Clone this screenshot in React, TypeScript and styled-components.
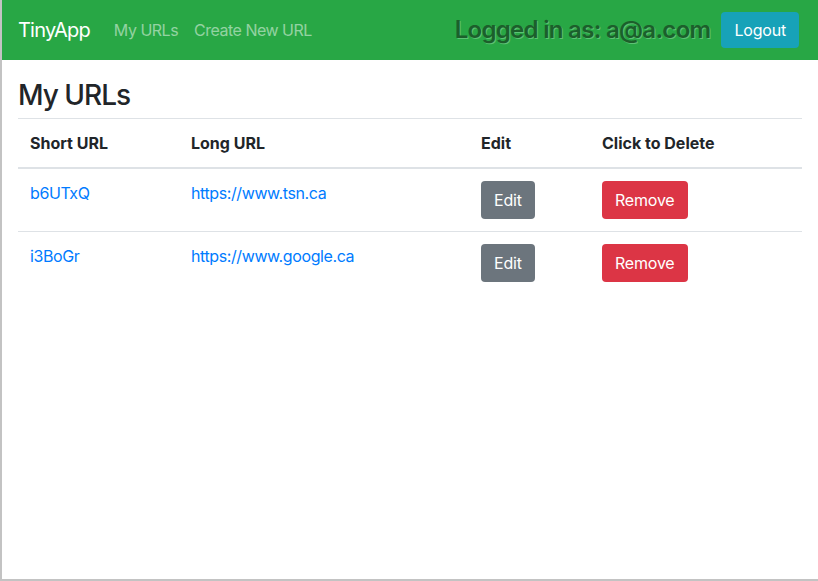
import React from "react";
import styled, { createGlobalStyle } from "styled-components";

const Global = createGlobalStyle`
  html, body { margin: 0; padding: 0; background: #fff; }
  body {
    font-family: Inter, "Noto Sans", "Liberation Sans", sans-serif;
    font-size: 16px;
    line-height: 1.5;
    color: #212529;
  }
  * { box-sizing: border-box; }
`;

const Frame = styled.div`
  min-height: 581px;
  border-left: 2px solid #c3c3c3;
  border-bottom: 2px solid #c3c3c3;
  display: flex;
  flex-direction: column;
`;

const Navbar = styled.nav`
  height: 60px;
  background: #28a745;
  display: flex;
  align-items: center;
  padding: 0 19px 0 16px;
`;

const Brand = styled.a`
  font-size: 20px;
  color: #fff;
  text-decoration: none;
  margin-right: 16px;
  letter-spacing: -0.8px;
`;

const NavLinks = styled.div`
  display: flex;
  flex: 1;
`;

const NavLink = styled.a`
  padding: 8px;
  color: rgba(255, 255, 255, 0.5);
  text-decoration: none;
  font-size: 16px;
  letter-spacing: -0.5px;
`;

const LoggedIn = styled.span`
  font-size: 24px;
  font-weight: 600;
  color: #1c5f2b;
  text-shadow: 1px 1px 0 #5cc274;
  margin-right: 11px;
  letter-spacing: -0.7px;
`;

const Button = styled.button<{ $variant: "info" | "secondary" | "danger" }>`
  font-family: inherit;
  font-size: 16px;
  line-height: 24px;
  padding: 6px 12px;
  border: 1px solid transparent;
  border-radius: 4px;
  color: #fff;
  cursor: pointer;
  letter-spacing: -0.2px;
  background: ${(p) =>
    p.$variant === "info" ? "#17a2b8" : p.$variant === "secondary" ? "#6c757d" : "#dc3545"};
`;

const LogoutButton = styled(Button)`
  line-height: 22px;
`;

const Main = styled.main`
  padding: 0 16px;
`;

const Title = styled.h3`
  font-size: 28px;
  font-weight: 500;
  line-height: 1.2;
  margin: 19px 0 5px;
  letter-spacing: -1px;
`;

const Table = styled.table`
  width: 100%;
  border-collapse: collapse;
`;

const Th = styled.th<{ $w: number }>`
  width: ${(p) => p.$w}px;
  text-align: left;
  font-weight: 700;
  padding: 12px;
  border-top: 1px solid #dee2e6;
  border-bottom: 2px solid #dee2e6;
  vertical-align: bottom;
  letter-spacing: 0;
`;

const Td = styled.td`
  padding: 12px;
  border-top: 1px solid #dee2e6;
  vertical-align: top;
`;

const Row = styled.tr`
  &:first-child td { border-top: none; }
`;

const Link = styled.a`
  color: #007bff;
  text-decoration: none;
  letter-spacing: -0.4px;
`;

const urls = [
  { short: "b6UTxQ", long: "https://www.tsn.ca" },
  { short: "i3BoGr", long: "https://www.google.ca" },
];

export default function App() {
  return (
    <Frame>
      <Global />
      <Navbar>
        <Brand href="#">TinyApp</Brand>
        <NavLinks>
          <NavLink href="#">My URLs</NavLink>
          <NavLink href="#">Create New URL</NavLink>
        </NavLinks>
        <LoggedIn>Logged in as: a@a.com</LoggedIn>
        <LogoutButton $variant="info">Logout</LogoutButton>
      </Navbar>
      <Main>
        <Title>My URLs</Title>
        <Table>
          <thead>
            <tr>
              <Th $w={161}>Short URL</Th>
              <Th $w={290}>Long URL</Th>
              <Th $w={121}>Edit</Th>
              <Th $w={212}>Click to Delete</Th>
            </tr>
          </thead>
          <tbody>
            {urls.map((u) => (
              <Row key={u.short}>
                <Td>
                  <Link href="#">{u.short}</Link>
                </Td>
                <Td>
                  <Link href="#">{u.long}</Link>
                </Td>
                <Td>
                  <Button $variant="secondary">Edit</Button>
                </Td>
                <Td>
                  <Button $variant="danger">Remove</Button>
                </Td>
              </Row>
            ))}
          </tbody>
        </Table>
      </Main>
    </Frame>
  );
}
